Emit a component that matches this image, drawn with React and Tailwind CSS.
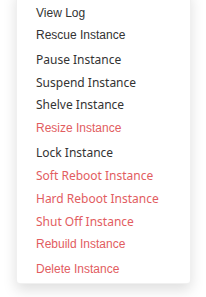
const NOTO = "font-['Noto_Sans',sans-serif]";
const ARIAL = "font-['Liberation_Sans',Arial,sans-serif]";

const items = [
  { label: "View Log", font: ARIAL, h: "h-[22px]" },
  { label: "Rescue Instance", font: ARIAL, h: "h-[25px]" },
  { label: "Pause Instance", font: NOTO, h: "h-[23px]" },
  { label: "Suspend Instance", font: NOTO, h: "h-[22px]" },
  { label: "Shelve Instance", font: NOTO, h: "h-[23px]" },
  { label: "Resize Instance", font: ARIAL, h: "h-[25px]", danger: true },
  { label: "Lock Instance", font: NOTO, h: "h-[23px]" },
  { label: "Soft Reboot Instance", font: NOTO, h: "h-[23px]", danger: true },
  { label: "Hard Reboot Instance", font: NOTO, h: "h-[23px]", danger: true },
  { label: "Shut Off Instance", font: NOTO, h: "h-[22px]", danger: true },
  { label: "Rebuild Instance", font: ARIAL, h: "h-[25px]", danger: true },
  { label: "Delete Instance", font: ARIAL, h: "h-[16px]", danger: true },
];

export default function App() {
  return (
    <div className="w-[206px] h-[297px] bg-white overflow-hidden">
      <div className="ml-4 w-[175px] -mt-[10px] pt-[14px] pb-[6px] pl-[19px] bg-white rounded-[4px] border border-black/[0.06] shadow-[0_6px_14px_rgba(0,0,0,0.13)]">
        {items.map((it) => (
          <div
            key={it.label}
            className={`${it.h} ${it.font} text-[12px] leading-4 whitespace-nowrap ${
              it.danger ? "text-[#e25d5f]" : "text-[#333333]"
            }`}
          >
            {it.label}
          </div>
        ))}
      </div>
    </div>
  );
}
